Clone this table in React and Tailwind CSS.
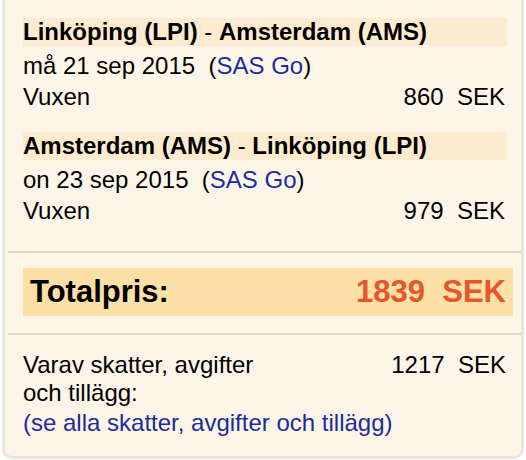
export default function App() {
  const blue = "text-[#1b2c9c]";
  return (
    <div className="w-[526px] h-[460px] bg-white overflow-hidden font-['Liberation_Sans',Arial,sans-serif] text-black">
      <div className="mx-[2px] h-[459px] bg-[#fdf6e8] border-x-[3px] border-b-[3px] border-[#ebe6dd] rounded-b-[10px] flex flex-col">
        {/* Flights */}
        <div className="pl-[18px] pr-[14px] pt-[18px]">
          <div className="bg-[#fdebcf] text-[24px] leading-[28px] h-[28px] whitespace-pre">
            <span className="font-bold">Linköping (LPI)</span> - <span className="font-bold">Amsterdam (AMS)</span>
          </div>
          <div className="mt-[4px] text-[24px] leading-[32px] whitespace-pre">
            må 21 sep 2015  (<span className={blue}>SAS Go</span>)
          </div>
          <div className="flex justify-between text-[24px] leading-[30px] pr-[2px]">
            <span>Vuxen</span>
            <span className="whitespace-pre">860  SEK</span>
          </div>

          <div className="mt-[20px] bg-[#fdebcf] text-[24px] leading-[28px] h-[28px] whitespace-pre">
            <span className="font-bold">Amsterdam (AMS)</span> - <span className="font-bold">Linköping (LPI)</span>
          </div>
          <div className="mt-[4px] text-[24px] leading-[32px] whitespace-pre">
            on 23 sep 2015  (<span className={blue}>SAS Go</span>)
          </div>
          <div className="flex justify-between text-[24px] leading-[30px] pr-[2px]">
            <span>Vuxen</span>
            <span className="whitespace-pre">979  SEK</span>
          </div>
        </div>

        <div className="mt-[25px] ml-[3px] h-[2px] bg-[#e3d9c7]" />

        {/* Total */}
        <div className="mt-[15px] ml-[18px] mr-[8px] h-[48px] bg-[#fde0a6] flex items-center justify-between pl-[7px] pr-[7px] font-bold text-[31px] leading-[48px]">
          <span>Totalpris:</span>
          <span className="whitespace-pre text-[#e5562a]">1839  SEK</span>
        </div>

        <div className="mt-[17px] ml-[3px] h-[2px] bg-[#e3d9c7]" />

        {/* Taxes */}
        <div className="mt-[16px] pl-[18px] pr-[15px] text-[24px]">
          <div className="flex justify-between leading-[28px]">
            <span>
              Varav skatter, avgifter
              <br />
              och tillägg:
            </span>
            <span className="whitespace-pre">1217  SEK</span>
          </div>
          <div className={`leading-[30px] mt-[1px] ${blue}`}>(se alla skatter, avgifter och tillägg)</div>
        </div>
      </div>
    </div>
  );
}
